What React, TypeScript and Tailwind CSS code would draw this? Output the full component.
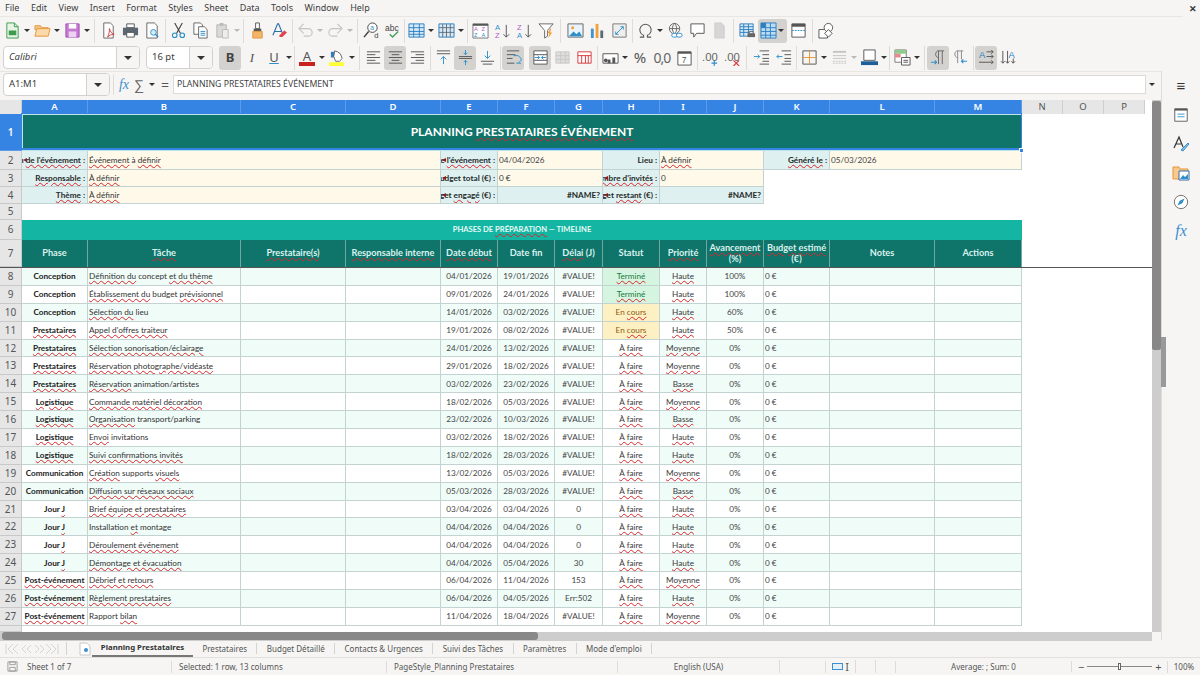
import React from 'react';

const GRID =
  'grid grid-cols-[22px_66px_153px_105px_95px_57px_57px_48px_57px_47px_57px_66px_105px_87px_41px_41px_41px]';

// ~mot~ = souligné par le correcteur
function Sp({ t }: { t: string }) {
  const parts = t.split('~');
  return (
    <>
      {parts.map((p, i) =>
        i % 2 === 1 ? (
          <span key={i} className="underline decoration-wavy decoration-[#d8262c] decoration-[1px] underline-offset-[1px]">
            {p}
          </span>
        ) : (
          <span key={i}>{p}</span>
        )
      )}
    </>
  );
}

const S = ({ children }: { children: React.ReactNode }) => (
  <svg viewBox="0 0 18 18" className="w-[17px] h-[17px]" fill="none" strokeWidth="1">
    {children}
  </svg>
);

const I = {
  newDoc: (
    <S>
      <path d="M3 1h8l4 4v12H3z" fill="#e6f4e6" stroke="#3f9a4f" />
      <path d="M5 9h8v5H5z" fill="#3f9a4f" />
      <path d="M11 1v4h4" stroke="#3f9a4f" />
    </S>
  ),
  open: (
    <S>
      <path d="M1 4h6l1 2h7v2H1z" fill="#f6c58a" stroke="#e5973a" />
      <path d="M1 15l2-8h14l-2 8z" fill="#fbd9a8" stroke="#e5973a" />
    </S>
  ),
  save: (
    <S>
      <path d="M2 2h14v14H2z" fill="#c678d2" stroke="#a352b3" />
      <path d="M5 2h8v5H5z" fill="#fff" />
      <path d="M5 10h8v6H5z" fill="#ecd4f0" />
    </S>
  ),
  pdf: (
    <S>
      <path d="M4 1h7l3 3v13H4z" fill="#fff" stroke="#666" />
      <path d="M8 16c2-4 2-7 2-9 1 3 2 5 5 6-3 0-5 1-7 3z" stroke="#d8393c" />
    </S>
  ),
  print: (
    <S>
      <path d="M5 2h8v4H5z" fill="#fff" stroke="#555" />
      <path d="M1 6h16v8H1z" fill="#5b6670" />
      <path d="M5 11h8v5H5z" fill="#fff" stroke="#555" />
    </S>
  ),
  preview: (
    <S>
      <path d="M3 1h8l3 3v13H3z" fill="#fff" stroke="#666" />
      <circle cx="10" cy="11" r="3" fill="#d7ecf8" stroke="#2f8fcb" />
      <path d="M12 13l3 3" stroke="#2f8fcb" strokeWidth="1.5" />
    </S>
  ),
  cut: (
    <S>
      <path d="M5 1l6 11M13 1L7 12" stroke="#444" strokeWidth="1.2" />
      <circle cx="5" cy="14" r="2.4" stroke="#2f8fcb" strokeWidth="1.2" />
      <circle cx="13" cy="14" r="2.4" stroke="#2f8fcb" strokeWidth="1.2" />
    </S>
  ),
  copy: (
    <S>
      <path d="M2 1h7l2 2v10H2z" fill="#fff" stroke="#666" />
      <path d="M7 5h6l3 3v9H7z" fill="#fff" stroke="#666" />
      <path d="M9 10h5M9 12h5M9 14h5" stroke="#2f8fcb" />
    </S>
  ),
  paste: (
    <S>
      <path d="M3 3h10v13H3z" fill="#d9d9d9" stroke="#b5b5b5" />
      <path d="M6 1h4v3H6z" fill="#bbb" />
      <path d="M9 8h6v9H9z" fill="#eee" stroke="#bbb" />
    </S>
  ),
  clone: (
    <S>
      <path d="M7 1h4v6H7z" fill="#fff" stroke="#555" />
      <path d="M5 7h8v3H5z" fill="#555" />
      <path d="M4 10h10v7H4z" fill="#f3b566" stroke="#e09a42" />
    </S>
  ),
  clear: (
    <S>
      <path d="M2 14L7 2h1l5 12M4 10h7" stroke="#2f6fa8" strokeWidth="1.2" />
      <path d="M9 14l5-5 3 2-5 5H9z" fill="#e5434a" />
    </S>
  ),
  undo: (
    <S>
      <path d="M3 7h9a4 4 0 010 8H7" stroke="#c4c4c4" strokeWidth="1.2" />
      <path d="M7 2L2 7l5 5" stroke="#c4c4c4" strokeWidth="1.2" />
    </S>
  ),
  redo: (
    <S>
      <path d="M15 7H6a4 4 0 000 8h5" stroke="#c4c4c4" strokeWidth="1.2" />
      <path d="M11 2l5 5-5 5" stroke="#c4c4c4" strokeWidth="1.2" />
    </S>
  ),
  find: (
    <S>
      <circle cx="10" cy="6" r="5" fill="#fff" stroke="#444" />
      <path d="M6 10l-5 6" stroke="#444" strokeWidth="1.6" />
      <text x="7.6" y="8" fontSize="7" fill="#2f8fcb" fontFamily="Liberation Sans, sans-serif">a</text>
      <text x="12" y="17" fontSize="8" fill="#444" fontFamily="Liberation Sans, sans-serif">d</text>
    </S>
  ),
  spell: (
    <S>
      <text x="0" y="9" fontSize="9" fill="#444" fontFamily="Liberation Sans, sans-serif">abc</text>
      <path d="M5 13l3 3 6-6" stroke="#46a05a" strokeWidth="1.5" />
    </S>
  ),
  rows: (
    <S>
      <path d="M1 2h16v14H1z" fill="#d6e9f6" stroke="#2f7fbf" />
      <path d="M1 6h16M1 10h16M1 13h16M6 2v14M12 2v14" stroke="#2f7fbf" />
    </S>
  ),
  cols: (
    <S>
      <path d="M1 2h16v14H1z" fill="#d6e9f6" stroke="#2f7fbf" />
      <path d="M1 6h16M1 11h16M5 2v14M9 2v14M13 2v14" stroke="#5f6f7c" />
    </S>
  ),
  sort: (
    <S>
      <path d="M1 2h16v15H1z" fill="#fff" stroke="#777" />
      <path d="M1 2h16v2H1z" fill="#555" />
      <text x="2" y="10" fontSize="6" fill="#b35ac6" fontFamily="Liberation Sans, sans-serif">A</text>
      <text x="10" y="10" fontSize="6" fill="#b35ac6" fontFamily="Liberation Sans, sans-serif">Z</text>
      <text x="2" y="16" fontSize="6" fill="#2f8fcb" fontFamily="Liberation Sans, sans-serif">Z</text>
      <text x="10" y="16" fontSize="6" fill="#2f8fcb" fontFamily="Liberation Sans, sans-serif">A</text>
    </S>
  ),
  asc: (
    <S>
      <text x="1" y="8" fontSize="8" fill="#2f8fcb" fontFamily="Liberation Sans, sans-serif">A</text>
      <text x="1" y="17" fontSize="8" fill="#b35ac6" fontFamily="Liberation Sans, sans-serif">Z</text>
      <path d="M13 3v13M10 13l3 3 3-3" stroke="#555" />
    </S>
  ),
  desc: (
    <S>
      <text x="1" y="8" fontSize="8" fill="#b35ac6" fontFamily="Liberation Sans, sans-serif">Z</text>
      <text x="1" y="17" fontSize="8" fill="#2f8fcb" fontFamily="Liberation Sans, sans-serif">A</text>
      <path d="M13 3v13M10 13l3 3 3-3" stroke="#555" />
    </S>
  ),
  filter: (
    <S>
      <path d="M1 2h15l-6 7v6l-3 2V9z" fill="#fff" stroke="#666" />
      <path d="M13 7l-3 5h2l-1 5 4-6h-2l1-4z" fill="#f0a33d" />
    </S>
  ),
  image: (
    <S>
      <path d="M1 2h16v14H1z" fill="#e8f3fb" stroke="#666" />
      <circle cx="6" cy="6" r="1.6" fill="#f0a33d" />
      <path d="M2 15l5-5 3 3 3-3 3 5z" fill="#2f8fcb" />
    </S>
  ),
  chart: (
    <S>
      <path d="M2 7h3v10H2z" fill="#3f93cf" />
      <path d="M7 2h3v15H7z" fill="#f0a33d" />
      <path d="M12 9h3v8h-3z" fill="#5d6a75" />
    </S>
  ),
  pivot: (
    <S>
      <path d="M2 2h14v14H2z" fill="#eee" stroke="#777" />
      <path d="M5 13l8-8M10 5h3v3M5 10v3h3" stroke="#2f8fcb" />
    </S>
  ),
  omega: (
    <S>
      <path d="M3 16h4v-2a6 6 0 114 0v2h4" stroke="#555" strokeWidth="1.1" />
    </S>
  ),
  link: (
    <S>
      <circle cx="8" cy="7" r="5.5" stroke="#666" />
      <path d="M2.5 7h11M8 1.5c-3 3-3 8 0 11M8 1.5c3 3 3 8 0 11" stroke="#666" />
      <rect x="5" y="12" width="6" height="4" rx="2" fill="#fff" stroke="#2f8fcb" />
      <rect x="10" y="12" width="6" height="4" rx="2" fill="#fff" stroke="#2f8fcb" />
    </S>
  ),
  comment: (
    <S>
      <path d="M2 2h14v10H8l-3 4v-4H2z" fill="#fff" stroke="#555" />
    </S>
  ),
  headers: (
    <S>
      <path d="M4 1h7l3 3v13H4z" fill="#d6d6d6" stroke="#cfcfcf" />
    </S>
  ),
  printArea: (
    <S>
      <path d="M1 2h14v13H1z" fill="#d6e9f6" stroke="#2f7fbf" />
      <path d="M1 5h14M1 8h14M1 11h14M5 2v13M10 2v13" stroke="#2f7fbf" />
      <path d="M9 12h8v4H9z" fill="#666" />
      <path d="M11 10h4v2h-4z" fill="#fff" stroke="#666" />
    </S>
  ),
  freeze: (
    <S>
      <path d="M1 1h16v16H1z" fill="#bcdcf2" stroke="#2f7fbf" />
      <path d="M1 6h16M1 10h16M1 14h16M6 1v16M11 1v16" stroke="#2f7fbf" />
      <path d="M1 1h5v5H1z" fill="#2f7fbf" />
    </S>
  ),
  split: (
    <S>
      <path d="M2 2h14v14H2z" fill="#fff" stroke="#555" />
      <path d="M2 2h14v3H2z" fill="#555" />
      <path d="M2 9h14" stroke="#2f8fcb" strokeDasharray="2 1" />
    </S>
  ),
  shapes: (
    <S>
      <path d="M1 8h9v9H1z" fill="#fff" stroke="#555" />
      <circle cx="11" cy="6" r="4.5" fill="#fff" stroke="#555" />
      <path d="M11 8l4 4-4 4-4-4z" fill="#fff" stroke="#555" />
    </S>
  ),
  highlight: (
    <S>
      <path d="M2 3h5v6H2z" fill="#2f7fbf" />
      <path d="M6 2l3 1 3 2 2 5-3 3H7L5 8z" fill="#fff" stroke="#666" />
      <path d="M0 14h16v4H0z" fill="#ffff38" />
    </S>
  ),
  left: (
    <S>
      <path d="M2 3h14M2 6h9M2 9h14M2 12h9M2 15h14" stroke="#555" />
    </S>
  ),
  center: (
    <S>
      <path d="M2 3h14M5 6h8M2 9h14M5 12h8M2 15h14" stroke="#555" />
    </S>
  ),
  right: (
    <S>
      <path d="M2 3h14M7 6h9M2 9h14M7 12h9M2 15h14" stroke="#555" />
    </S>
  ),
  top: (
    <S>
      <path d="M2 2h14M2 5h14" stroke="#555" />
      <path d="M9 16V8M6 11l3-3 3 3" stroke="#2f8fcb" />
    </S>
  ),
  vcenter: (
    <S>
      <path d="M2 8h14M2 10h14" stroke="#555" />
      <path d="M9 1v5M7 4l2 2 2-2M9 17v-5M7 14l2-2 2 2" stroke="#2f8fcb" />
    </S>
  ),
  bottom: (
    <S>
      <path d="M2 13h14M4 16h10" stroke="#555" />
      <path d="M9 2v8M6 7l3 3 3-3" stroke="#2f8fcb" />
    </S>
  ),
  wrap: (
    <S>
      <path d="M2 2h13M2 6h9M2 10h6M2 15h8" stroke="#555" />
      <path d="M9 7h5l3 3v2l-3 3M12 15h5" stroke="#2f8fcb" />
    </S>
  ),
  merge: (
    <S>
      <path d="M2 2h14v14H2z" fill="#fff" stroke="#555" />
      <path d="M2 6h14M2 12h14" stroke="#555" />
      <path d="M3 9h5M15 9h-5M6 7l2 2-2 2M12 7l-2 2 2 2" stroke="#2f8fcb" />
    </S>
  ),
  mergeOff: (
    <S>
      <path d="M2 3h14v12H2z" fill="#ddd" stroke="#c8c8c8" />
      <path d="M2 7h14M2 11h14M7 3v12M12 3v12" stroke="#c8c8c8" />
    </S>
  ),
  splitCell: (
    <S>
      <path d="M2 3h14v12H2z" fill="#fff" stroke="#d8393c" />
      <path d="M2 7h14M6 7v8M10 7v8M13 7v8" stroke="#d8393c" />
    </S>
  ),
  currency: (
    <S>
      <path d="M1 5h16v10H1z" fill="#fff" stroke="#555" />
      <path d="M6 11h3v4H6zM11 9h3v6h-3z" fill="#555" />
      <circle cx="4" cy="12" r="2" fill="#555" />
    </S>
  ),
  percent: <span className="text-[15px] text-[#555] leading-none">%</span>,
  zero: <span className="text-[14px] text-[#666] leading-none tracking-[-1px]">0,0</span>,
  date: (
    <S>
      <path d="M2 3h14v14H2z" fill="#fff" stroke="#555" />
      <path d="M2 3h14v2H2z" fill="#555" />
      <text x="6" y="15" fontSize="9" fill="#555" fontFamily="Liberation Sans, sans-serif">7</text>
    </S>
  ),
  addDec: (
    <S>
      <text x="0" y="13" fontSize="12" fill="#666" fontFamily="Liberation Sans, sans-serif">.00</text>
      <path d="M13 12v6M10 15h6" stroke="#2f8fcb" strokeWidth="1.2" />
    </S>
  ),
  delDec: (
    <S>
      <text x="0" y="13" fontSize="12" fill="#666" fontFamily="Liberation Sans, sans-serif">.00</text>
      <path d="M10 12l6 6M16 12l-6 6" stroke="#d8393c" strokeWidth="1.2" />
    </S>
  ),
  indent: (
    <S>
      <path d="M7 2h10M10 6h7M10 10h7M10 13h7M7 16h10" stroke="#555" />
      <path d="M1 8h6M5 6l2 2-2 2" stroke="#2f8fcb" />
    </S>
  ),
  outdent: (
    <S>
      <path d="M7 2h10M10 6h7M10 10h7M10 13h7M7 16h10" stroke="#555" />
      <path d="M8 8H2M4 6L2 8l2 2" stroke="#2f8fcb" />
    </S>
  ),
  borders: (
    <S>
      <path d="M2 2h14v14H2z" stroke="#555" />
      <path d="M9 2v14M2 9h14" stroke="#e5973a" />
    </S>
  ),
  lineStyle: (
    <S>
      <path d="M2 3h14" stroke="#c4c4c4" strokeWidth="2" />
      <path d="M2 7h14M2 10h14" stroke="#c4c4c4" />
      <path d="M2 13h14M2 15h14" stroke="#c4c4c4" strokeDasharray="2 1" />
    </S>
  ),
  borderColor: (
    <S>
      <path d="M3 1h12v11H3z" fill="#fff" stroke="#555" />
      <path d="M0 13h18v4H0z" fill="#1c5f9c" />
    </S>
  ),
  cond: (
    <S>
      <path d="M1 1h12v13H1z" fill="#fff" stroke="#777" />
      <path d="M1 1h12v4H1z" fill="#8fca8f" />
      <path d="M1 5h6v4H1z" fill="#e98a8a" />
      <path d="M8 9h9v8H8z" fill="#fff" stroke="#555" />
      <path d="M10 12h5M10 14h5" stroke="#555" />
    </S>
  ),
  ltr: (
    <S>
      <path d="M9 2v14M13 2v14M15 2H8a4 4 0 000 7h1" stroke="#666" />
      <path d="M1 14h6M5 12l2 2-2 2" stroke="#2f8fcb" strokeWidth="1.2" />
    </S>
  ),
  rtl: (
    <S>
      <path d="M6 2v13M10 2v9M12 2H5a4 4 0 000 7h1" stroke="#888" />
      <path d="M16 13h-6M12 11l-2 2 2 2" stroke="#2f8fcb" strokeWidth="1.2" />
    </S>
  ),
  horiz: (
    <S>
      <text x="1" y="9" fontSize="10" fill="#2f7fbf" fontFamily="Liberation Sans, sans-serif">A</text>
      <path d="M9 3h7M14 1l2 2-2 2M9 8h7M14 6l2 2-2 2M1 14h15M14 12l2 2-2 2" stroke="#555" />
    </S>
  ),
  vert: (
    <S>
      <path d="M3 2v13M1 13l2 2 2-2M8 2v13M6 13l2 2 2-2M14 10v5M12 13l2 2 2-2" stroke="#555" />
      <text x="9" y="9" fontSize="10" fill="#2f7fbf" fontFamily="Liberation Sans, sans-serif">A</text>
    </S>
  ),
};

const Btn = ({ i, on, cls = 'w-[22px]' }: { i: React.ReactNode; on?: boolean; cls?: string }) => (
  <div className={`${cls} h-[24px] flex-none flex items-center justify-center rounded-[3px] ${on ? 'bg-[#d4d2cf]' : ''}`}>{i}</div>
);
const Arrow = ({ off, cls = 'w-[8px]' }: { off?: boolean; cls?: string }) => (
  <div className={`${cls} flex-none flex justify-center`}>
    <div className={`border-x-[3px] border-x-transparent border-t-[3px] ${off ? 'border-t-[#b9b9b9]' : 'border-t-[#333]'}`} />
  </div>
);
const Sep = ({ cls = 'w-[4px]' }: { cls?: string }) => (
  <div className={`${cls} h-[24px] flex-none flex justify-center`}>
    <div className="w-px h-full bg-[#dedcd9]" />
  </div>
);

const Drop = ({ label, box, cls = '' }: { label: string; box: string; cls?: string }) => (
  <div className={`${box} h-[23px] flex-none flex bg-white border border-[#d3d1ce] rounded-[4px] overflow-hidden`}>
    <div className={`flex-1 pl-[5px] flex items-center text-[9.5px] text-[#3d3d3d] ${cls}`}>{label}</div>
    <div className="w-[23px] flex items-center justify-center bg-[#f6f5f4] border-l border-[#d3d1ce]">
      <div className="border-x-[4px] border-x-transparent border-t-[4px] border-t-[#333]" />
    </div>
  </div>
);

const Hd = ({ t, on }: { t: string; on?: boolean }) => (
  <div
    className={`flex items-center justify-center text-[9.5px] border-r ${
      on ? 'bg-[#3584e4] text-white font-semibold border-[#5c9ce8]' : 'bg-[#e6e6e6] text-[#555] border-[#cfcfcf]'
    }`}
  >
    {t}
  </div>
);

const RowNo = ({ n, on }: { n: number | string; on?: boolean }) => (
  <div
    className={`flex items-center justify-center text-[10px] font-['Noto_Sans',sans-serif] border-b border-r ${
      on ? 'bg-[#3584e4] text-white font-semibold border-[#5c9ce8]' : 'bg-[#e6e6e6] text-[#555] border-[#c9c9c9]'
    }`}
  >
    {n}
  </div>
);

const B = 'border-r border-b border-[#c3d3d1]';
const LBL = `${B} bg-[#dff0f0] font-bold text-[#1f2b2a] flex items-center justify-end pr-[2px] overflow-hidden whitespace-nowrap relative`;
const VAL = `${B} bg-[#fff9ea] text-[#333] flex items-center pl-[1px] overflow-hidden whitespace-nowrap`;

const Clip = () => <span className="absolute left-[1px] top-1/2 -mt-[2.5px] border-y-[2.5px] border-y-transparent border-r-[4px] border-r-[#8c1d1d]" />;

const Label = ({ t, clip, span }: { t: string; clip?: boolean; span?: string }) => (
  <div className={`${LBL} ${span ?? ''}`}>
    <span className="flex-none">
      <Sp t={t} />
    </span>
    {clip && <Clip />}
  </div>
);

type R = [string, string, string, string, string, string, string, string];
const ROWS: R[] = [
  ['Conception', '~Définition du~ concept ~et du thème~', '04/01/2026', '19/01/2026', '#VALUE!', 'T', 'Haute', '100%'],
  ['Conception', '~Établissement du~ budget ~prévisionnel~', '09/01/2026', '24/01/2026', '#VALUE!', 'T', 'Haute', '100%'],
  ['Conception', '~Sélection du~ lieu', '14/01/2026', '03/02/2026', '#VALUE!', 'E', 'Haute', '60%'],
  ['~Prestataires~', '~Appel d\'offres traiteur~', '19/01/2026', '08/02/2026', '#VALUE!', 'E', 'Haute', '50%'],
  ['~Prestataires~', '~Sélection sonorisation/éclairage~', '24/01/2026', '13/02/2026', '#VALUE!', 'F', 'Moyenne', '0%'],
  ['~Prestataires~', '~Réservation photographe/vidéaste~', '29/01/2026', '18/02/2026', '#VALUE!', 'F', 'Moyenne', '0%'],
  ['~Prestataires~', '~Réservation~ animation/artistes', '03/02/2026', '23/02/2026', '#VALUE!', 'F', 'Basse', '0%'],
  ['~Logistique~', '~Commande matériel décoration~', '18/02/2026', '05/03/2026', '#VALUE!', 'F', 'Moyenne', '0%'],
  ['~Logistique~', '~Organisation~ transport/parking', '23/02/2026', '10/03/2026', '#VALUE!', 'F', 'Basse', '0%'],
  ['~Logistique~', '~Envoi~ invitations', '03/02/2026', '18/02/2026', '#VALUE!', 'F', 'Haute', '0%'],
  ['~Logistique~', '~Suivi confirmations invités~', '18/02/2026', '28/03/2026', '#VALUE!', 'F', 'Haute', '0%'],
  ['Communication', '~Création~ supports ~visuels~', '13/02/2026', '05/03/2026', '#VALUE!', 'F', 'Moyenne', '0%'],
  ['Communication', '~Diffusion sur réseaux sociaux~', '05/03/2026', '28/03/2026', '#VALUE!', 'F', 'Basse', '0%'],
  ['Jour ~J~', '~Brief équipe et prestataires~', '03/04/2026', '03/04/2026', '0', 'F', 'Haute', '0%'],
  ['Jour ~J~', 'Installation ~et~ montage', '04/04/2026', '04/04/2026', '0', 'F', 'Haute', '0%'],
  ['Jour ~J~', '~Déroulement événement~', '04/04/2026', '04/04/2026', '0', 'F', 'Haute', '0%'],
  ['Jour ~J~', '~Démontage et évacuation~', '04/04/2026', '05/04/2026', '30', 'F', 'Haute', '0%'],
  ['~Post-événement~', '~Débrief et retours~', '06/04/2026', '11/04/2026', '153', 'F', 'Moyenne', '0%'],
  ['~Post-événement~', '~Règlement prestataires~', '06/04/2026', '04/05/2026', 'Err:502', 'F', 'Haute', '0%'],
  ['~Post-événement~', 'Rapport ~bilan~', '11/04/2026', '18/04/2026', '#VALUE!', 'F', 'Moyenne', '0%'],
];

// | = retour à la ligne dans la cellule
const HEAD = ['Phase', '~Tâche~', '~Prestataire(s)~', '~Responsable interne~', '~Date début~', 'Date fin', '~Délai~ (J)', 'Statut', '~Priorité~', '~Avancement~|(%)', '~Budget estimé~|(€)', 'Notes', 'Actions'];

function DataRow({ r, idx }: { r: R; idx: number }) {
  const bg = idx % 2 === 0 ? 'bg-[#effcf8]' : 'bg-white';
  const c = `${B} ${bg} flex items-center overflow-hidden whitespace-nowrap`;
  const st =
    r[5] === 'T'
      ? { cls: 'bg-[#d6f5e0] text-[#177a3e]', t: '~Terminé~' }
      : r[5] === 'E'
      ? { cls: 'bg-[#fdf1c4] text-[#8f5a12]', t: 'En ~cours~' }
      : { cls: 'bg-white text-[#3a3a3a]', t: '~À faire~' };
  return (
    <div className={`${GRID} h-[17.9px]`}>
      <RowNo n={idx + 8} />
      <div className={`${c} justify-center font-bold text-[#222]`}>
        <span>
          <Sp t={r[0]} />
        </span>
      </div>
      <div className={`${c} pl-[1px] text-[#333]`}>
        <span>
          <Sp t={r[1]} />
        </span>
      </div>
      <div className={c} />
      <div className={c} />
      <div className={`${c} justify-center text-[#444]`}>{r[2]}</div>
      <div className={`${c} justify-center text-[#444]`}>{r[3]}</div>
      <div className={`${c} justify-center text-[#444]`}>{r[4]}</div>
      <div className={`${B} ${st.cls} flex items-center justify-center whitespace-nowrap`}>
        <span>
          <Sp t={st.t} />
        </span>
      </div>
      <div className={`${c} justify-center text-[#3a3a3a]`}>
        <span>
          <Sp t={`~${r[6]}~`} />
        </span>
      </div>
      <div className={`${c} justify-center text-[#444]`}>{r[7]}</div>
      <div className={`${c} pl-[1px] text-[#444]`}>0 €</div>
      <div className={c} />
      <div className={c} />
      <div className="col-span-3 bg-white" />
    </div>
  );
}

function Sheet() {
  return (
    <div className="relative w-[1152px] flex-none text-[8.2px] overflow-hidden h-[532px] bg-white font-['Lato',sans-serif]">
      {/* En-têtes de colonnes */}
      <div className={`${GRID} h-[14px] font-['Noto_Sans',sans-serif]`}>
        <Hd t="" />
        {'A B C D E F G H I J K L M'.split(' ').map((l) => (
          <Hd key={l} t={l} on />
        ))}
        <Hd t="N" />
        <Hd t="O" />
        <Hd t="P" />
      </div>

      {/* Titre */}
      <div className={`${GRID} h-[37px]`}>
        <RowNo n={1} on />
        <div className="col-span-13 bg-[#0f7469] border border-[#bfe3ea] pb-[2px] flex items-center justify-center text-white font-bold text-[12px]">
          <span>
            <Sp t="PLANNING ~PRESTATAIRES ÉVÉNEMENT~" />
          </span>
        </div>
        <div className="col-span-3 bg-white" />
      </div>

      {/* Infos */}
      <div className={`${GRID} h-[19px]`}>
        <RowNo n={2} />
        <Label t="Nom ~de l'événement~ :" clip />
        <div className={`${VAL} col-span-3`}>
          <span>
            <Sp t="~Événement~ à ~définir~" />
          </span>
        </div>
        <Label t="Date de ~l'événement~ :" clip />
        <div className={`${VAL} col-span-2 text-[#444]`}>04/04/2026</div>
        <Label t="Lieu :" />
        <div className={`${VAL} col-span-2`}>
          <span>
            <Sp t="~À définir~" />
          </span>
        </div>
        <Label t="~Généré le~ :" />
        <div className={`${VAL} col-span-2 text-[#444]`}>05/03/2026</div>
        <div className="col-span-3 bg-white" />
      </div>
      <div className={`${GRID} h-[17px]`}>
        <RowNo n={3} />
        <Label t="~Responsable~ :" />
        <div className={`${VAL} col-span-3`}>
          <span>
            <Sp t="~À définir~" />
          </span>
        </div>
        <Label t="Budget total (€) :" clip />
        <div className={`${VAL} col-span-2`}>0 €</div>
        <Label t="~Nombre d'invités~ :" clip />
        <div className={`${VAL} col-span-2`}>0</div>
        <div className="col-span-6 bg-white" />
      </div>
      <div className={`${GRID} h-[17px]`}>
        <RowNo n={4} />
        <Label t="~Thème~ :" />
        <div className={`${VAL} col-span-3`}>
          <span>
            <Sp t="~À définir~" />
          </span>
        </div>
        <Label t="Budget ~engagé~ (€) :" clip />
        <Label t="#NAME?" span="col-span-2" />
        <Label t="Budget ~restant~ (€) :" clip />
        <Label t="#NAME?" span="col-span-2" />
        <div className="col-span-6 bg-white" />
      </div>
      <div className={`${GRID} h-[16px]`}>
        <RowNo n={5} />
        <div className="col-span-16 bg-white" />
      </div>
      <div className={`${GRID} h-[20px]`}>
        <RowNo n={6} />
        <div className="col-span-13 bg-[#14b5a2] flex items-center justify-center text-[#e6fbf7] font-bold text-[7.6px]">
          <span>
            PHASES DE <Sp t="~PRÉPARATION~" /> — TIMELINE
          </span>
        </div>
        <div className="col-span-3 bg-white" />
      </div>

      {/* Titres du tableau */}
      <div className={`${GRID} h-[28px] border-b border-[#555]`}>
        <RowNo n={7} />
        {HEAD.map((h) => (
          <div key={h} className="bg-[#0f7469] border-r border-[#6fa8a1] flex flex-col items-center justify-center text-center leading-[10.5px] font-bold text-[#d9f2ee] text-[9.2px] whitespace-nowrap">
            {h.split('|').map((l) => (
              <span key={l}>
                <Sp t={l} />
              </span>
            ))}
          </div>
        ))}
        <div className="col-span-3 bg-white" />
      </div>

      {ROWS.map((r, i) => (
        <DataRow key={i} r={r} idx={i} />
      ))}
      <div className={`${GRID} h-[6px]`}>
        <RowNo n="" />
      </div>

      {/* Sélection A1:M1 */}
      <div className="absolute left-[21px] top-[13px] w-[1001px] h-[37px] border border-[#3584e4] border-b-2 pointer-events-none" />
      <div className="absolute left-[1019px] top-[48px] w-[5px] h-[5px] bg-[#3584e4] border border-white" />
    </div>
  );
}

function SideIcon({ children }: { children: React.ReactNode }) {
  return <div className="h-[29px] flex items-center justify-center">{children}</div>;
}

export default function App() {
  return (
    <div className="w-[1200px] h-[675px] overflow-hidden bg-[#f6f5f4] flex flex-col font-['Noto_Sans',sans-serif] text-[#3d3d3d]">
      {/* Menu */}
      <div className="h-[17px] flex-none flex items-center pl-[5px] text-[9px] border-b border-[#e8e6e3] mr-[17px] relative">
        {['File', 'Edit', 'View', 'Insert', 'Format', 'Styles', 'Sheet', 'Data', 'Tools', 'Window', 'Help'].map((m) => (
          <span key={m} className="mr-[11.5px]">
            {m}
          </span>
        ))}
        <span className="absolute right-[-14px] top-[2px] text-[9px] font-bold text-[#333]">✕</span>
      </div>

      {/* Barre standard */}
      <div className="h-[27px] flex-none flex items-center pl-[1px]">
        <Btn i={I.newDoc} /><Arrow /><Btn i={I.open} /><Arrow /><Btn i={I.save} /><Arrow /><Sep cls="w-[6px]" />
        <Btn i={I.pdf} /><Btn i={I.print} /><Btn i={I.preview} /><Sep />
        <Btn i={I.cut} /><Btn i={I.copy} /><Btn i={I.paste} /><Arrow off /><Sep cls="w-[5px]" />
        <Btn i={I.clone} /><Btn i={I.clear} /><Sep />
        <Btn i={I.undo} /><Arrow off /><Btn i={I.redo} /><Arrow off /><Sep cls="w-[6px]" />
        <Btn i={I.find} /><Btn i={I.spell} /><Sep cls="w-[1px]" />
        <Btn i={I.rows} /><Arrow /><Btn i={I.cols} /><Arrow /><Sep />
        <Btn i={I.sort} /><Btn i={I.asc} /><Btn i={I.desc} /><Btn i={I.filter} /><Sep cls="w-[7px]" />
        <Btn i={I.image} /><Btn i={I.chart} /><Btn i={I.pivot} /><Sep />
        <Btn i={I.omega} /><Arrow /><Btn i={I.link} /><Btn i={I.comment} /><Btn i={I.headers} /><Sep cls="w-[6px]" />
        <Btn i={I.printArea} />
        <Btn on i={<div className="flex items-center">{I.freeze}<Arrow /></div>} cls="w-[29px]" />
        <Btn i={I.split} /><Sep cls="w-[6px]" />
        <Btn i={I.shapes} />
      </div>

      {/* Barre de formatage */}
      <div className="h-[27px] flex-none flex items-center pl-[3px]">
        <Drop label="Calibri" box="w-[137px]" cls="italic" />
        <div className="w-[6px]" />
        <Drop label="16 pt" box="w-[67px]" />
        <div className="w-[6px]" />
        <Btn on cls="w-[22px]" i={<span className="font-bold text-[13px] text-[#444]">B</span>} />
        <Btn i={<span className="italic text-[13px] text-[#555] font-['Liberation_Serif',serif]">I</span>} />
        <Btn i={<span className="underline decoration-[#2f8fcb] text-[13px] text-[#555]">U</span>} />
        <Arrow /><Sep cls="w-[3px]" />
        <Btn i={<div className="flex flex-col items-center"><span className="text-[13px] leading-[12px] text-[#555]">A</span><span className="w-[16px] h-[4px] bg-[#c9211e]" /></div>} />
        <Arrow />
        <Btn i={I.highlight} />
        <Arrow /><Sep cls="w-[6px]" />
        <Btn i={I.left} /><Btn on i={I.center} /><Btn i={I.right} /><Sep />
        <Btn i={I.top} /><Btn on i={I.vcenter} /><Btn i={I.bottom} /><Sep />
        <Btn on i={I.wrap} /><Btn on i={I.merge} cls="w-[22px] ml-[5px]" /><Btn i={I.mergeOff} /><Btn i={I.splitCell} /><Sep />
        <Btn i={I.currency} /><Arrow /><Btn i={I.percent} /><Btn i={I.zero} /><Btn i={I.date} /><Sep />
        <Btn i={I.addDec} /><Btn i={I.delDec} /><Sep cls="w-[7px]" />
        <Btn i={I.indent} /><Btn i={I.outdent} /><Sep />
        <Btn i={I.borders} /><Arrow /><Btn i={I.lineStyle} /><Arrow off /><Btn i={I.borderColor} /><Arrow /><Sep cls="w-[3px]" />
        <Btn i={I.cond} /><Arrow /><Sep cls="w-[6px]" />
        <Btn on i={I.ltr} /><Btn i={I.rtl} /><Sep />
        <Btn on i={I.horiz} /><Btn i={I.vert} />
      </div>

      <div className="flex-1 flex min-h-0">
        <div className="w-[1161px] flex-none flex flex-col">
          {/* Barre de formule */}
          <div className="h-[29px] flex-none flex items-center pl-[3px] pb-[3px] border-t border-[#e8e6e3]">
            <Drop label="A1:M1" box="w-[107px]" />
            <div className="w-[3px]" />
            <div className="w-px h-[20px] bg-[#dedcd9]" />
            <span className="w-[14px] ml-[3px] text-center italic text-[14px] text-[#3a8fd1] font-['Liberation_Serif',serif]">fx</span>
            <span className="w-[16px] text-center text-[14px] text-[#666]">∑</span>
            <Arrow cls="w-[10px]" />
            <span className="w-[16px] text-center text-[14px] text-[#555]">=</span>
            <div className="w-[973px] h-[19px] bg-white border border-[#dcdad7] flex items-center pl-[3px] text-[8.7px] text-[#444]">PLANNING PRESTATAIRES ÉVÉNEMENT</div>
            <Arrow cls="w-[12px]" />
          </div>

          <div className="flex flex-none">
            <Sheet />
            <div className="w-[9px] h-[532px] bg-[#cdcdcd] relative">
              <div className="absolute left-0 top-[1px] w-[9px] h-[249px] bg-[#888] rounded-[2px]" />
            </div>
          </div>
          {/* Barre horizontale */}
          <div className="h-[9px] flex-none bg-[#cdcdcd] relative w-[1152px]">
            <div className="absolute left-[2px] top-0 w-[536px] h-[8px] bg-[#888] rounded-[3px]" />
          </div>
        </div>

        {/* Barre latérale */}
        <div className="flex-1 relative border-l border-[#dedcd9] flex flex-col items-center">
          <div className="absolute -left-[1px] top-[266px] w-[5px] h-[50px] bg-[#999]" />
          <SideIcon>
            <span className="text-[15px] font-bold text-[#333]">≡</span>
          </SideIcon>
          <SideIcon>
            <svg viewBox="0 0 18 18" className="w-[16px] h-[16px]" fill="none">
              <path d="M2 2h14v14H2z" fill="#fff" stroke="#555" />
              <path d="M2 2h14v2H2z" fill="#555" />
              <path d="M5 8h8M5 11h8" stroke="#2f8fcb" />
            </svg>
          </SideIcon>
          <SideIcon>
            <svg viewBox="0 0 18 18" className="w-[18px] h-[18px]" fill="none">
              <path d="M2 13L7 2l4 10M4 9h5" stroke="#333" strokeWidth="1.2" />
              <path d="M9 15l7-7 1 1-6 7z" fill="#8fc0e2" stroke="#2f8fcb" />
            </svg>
          </SideIcon>
          <SideIcon>
            <svg viewBox="0 0 18 18" className="w-[18px] h-[18px]" fill="none">
              <path d="M1 3h6l1 2h8v10H1z" fill="#f9c98d" stroke="#e5973a" />
              <path d="M7 7h10v9H7z" fill="#fff" stroke="#2f6fa8" />
              <path d="M8 15l3-4 2 2 3-3v5z" fill="#2f8fcb" />
            </svg>
          </SideIcon>
          <SideIcon>
            <svg viewBox="0 0 18 18" className="w-[16px] h-[16px]" fill="none">
              <circle cx="9" cy="9" r="7.5" stroke="#666" fill="#fff" />
              <path d="M13 5l-2.5 5.5L5 13l2.5-5.5z" fill="#2f8fcb" />
            </svg>
          </SideIcon>
          <SideIcon>
            <span className="italic text-[16px] text-[#3a8fd1] font-['Liberation_Serif',serif]">fx</span>
          </SideIcon>
        </div>
      </div>

      {/* Onglets */}
      <div className="h-[18px] flex-none flex items-center text-[8px] text-[#555] border-b border-[#e2e0dd] relative whitespace-nowrap">
        <div className="w-[66px] pl-[5px]">
          <svg viewBox="0 0 54 12" className="w-[54px] h-[12px]" fill="none" stroke="#d4d4d4">
            <path d="M1 1v10M8 1L3 6l5 5M13 1L8 6l5 5M21 2l-4 4 4 4M26 2l-4 4 4 4M30 2l4 4-4 4M35 2l4 4-4 4M41 1l5 5-5 5M46 1l5 5-5 5M53 1v10" />
          </svg>
        </div>
        <span className="w-px h-[13px] bg-[#d5d3d0]" />
        <svg viewBox="0 0 12 14" className="w-[12px] h-[14px] ml-[12px]" fill="none">
          <path d="M1 1h7l3 3v9H1z" fill="#fff" stroke="#c8c8c8" />
          <circle cx="7" cy="8" r="2" fill="#3a8fd1" />
        </svg>
        <div className="ml-[1px] w-[101px] h-full flex items-center justify-center font-bold text-[#333] text-[7.8px] border-b-2 border-[#777]">Planning Prestataires</div>
        {['Prestataires', 'Budget Détaillé', 'Contacts & Urgences', 'Suivi des Tâches', 'Paramètres', "Mode d'emploi"].map((t) => (
          <div key={t} className="flex items-center">
            <span className="px-[9.4px]">{t}</span>
            <span className="w-px h-[11px] bg-[#d5d3d0]" />
          </div>
        ))}
      </div>

      {/* Barre d'état */}
      <div className="h-[17px] flex-none flex items-center text-[8px] text-[#555]">
        <div className="w-[171px] flex items-center pl-[7px]">
          <svg viewBox="0 0 12 12" className="w-[11px] h-[11px] mr-[9px]" fill="none">
            <path d="M1 1h10v10H1z" stroke="#999" />
            <path d="M3 1h6v3H3zM3 7h6v4H3z" stroke="#999" />
          </svg>
          Sheet 1 of 7
        </div>
        <div className="w-[215px] pl-[7px] border-l border-[#dedcd9]">Selected: 1 row, 13 columns</div>
        <div className="w-[231px] pl-[7px] border-l border-[#dedcd9]">PageStyle_Planning Prestataires</div>
        <div className="w-[162px] text-center border-l border-[#dedcd9]">English (USA)</div>
        <div className="w-[46px] border-l border-[#dedcd9] h-[13px]" />
        <div className="w-[30px] border-l border-[#dedcd9] flex items-center justify-center gap-[2px]">
          <span className="w-[11px] h-[7px] border border-[#3a8fd1] bg-[#e4f0f9]" />
          <span className="text-[11px] leading-[12px] text-[#555]">I</span>
        </div>
        <div className="w-[20px] border-l border-[#dedcd9] h-[13px]" />
        <div className="w-[20px] border-l border-[#dedcd9] h-[13px]" />
        <div className="w-[176px] text-center border-l border-[#dedcd9]">Average: ; Sum: 0</div>
        <div className="w-[96px] flex items-center pl-[6px] border-l border-[#dedcd9]">
          <span className="text-[11px] leading-none mr-[3px]">−</span>
          <div className="w-[65px] h-px bg-[#888] relative">
            <span className="absolute left-[31px] -top-[3px] w-[3px] h-[7px] border border-[#666] bg-white" />
          </div>
          <span className="text-[11px] leading-none ml-[3px]">+</span>
        </div>
        <div className="flex-1 text-center border-l border-[#dedcd9]">100%</div>
      </div>
    </div>
  );
}
